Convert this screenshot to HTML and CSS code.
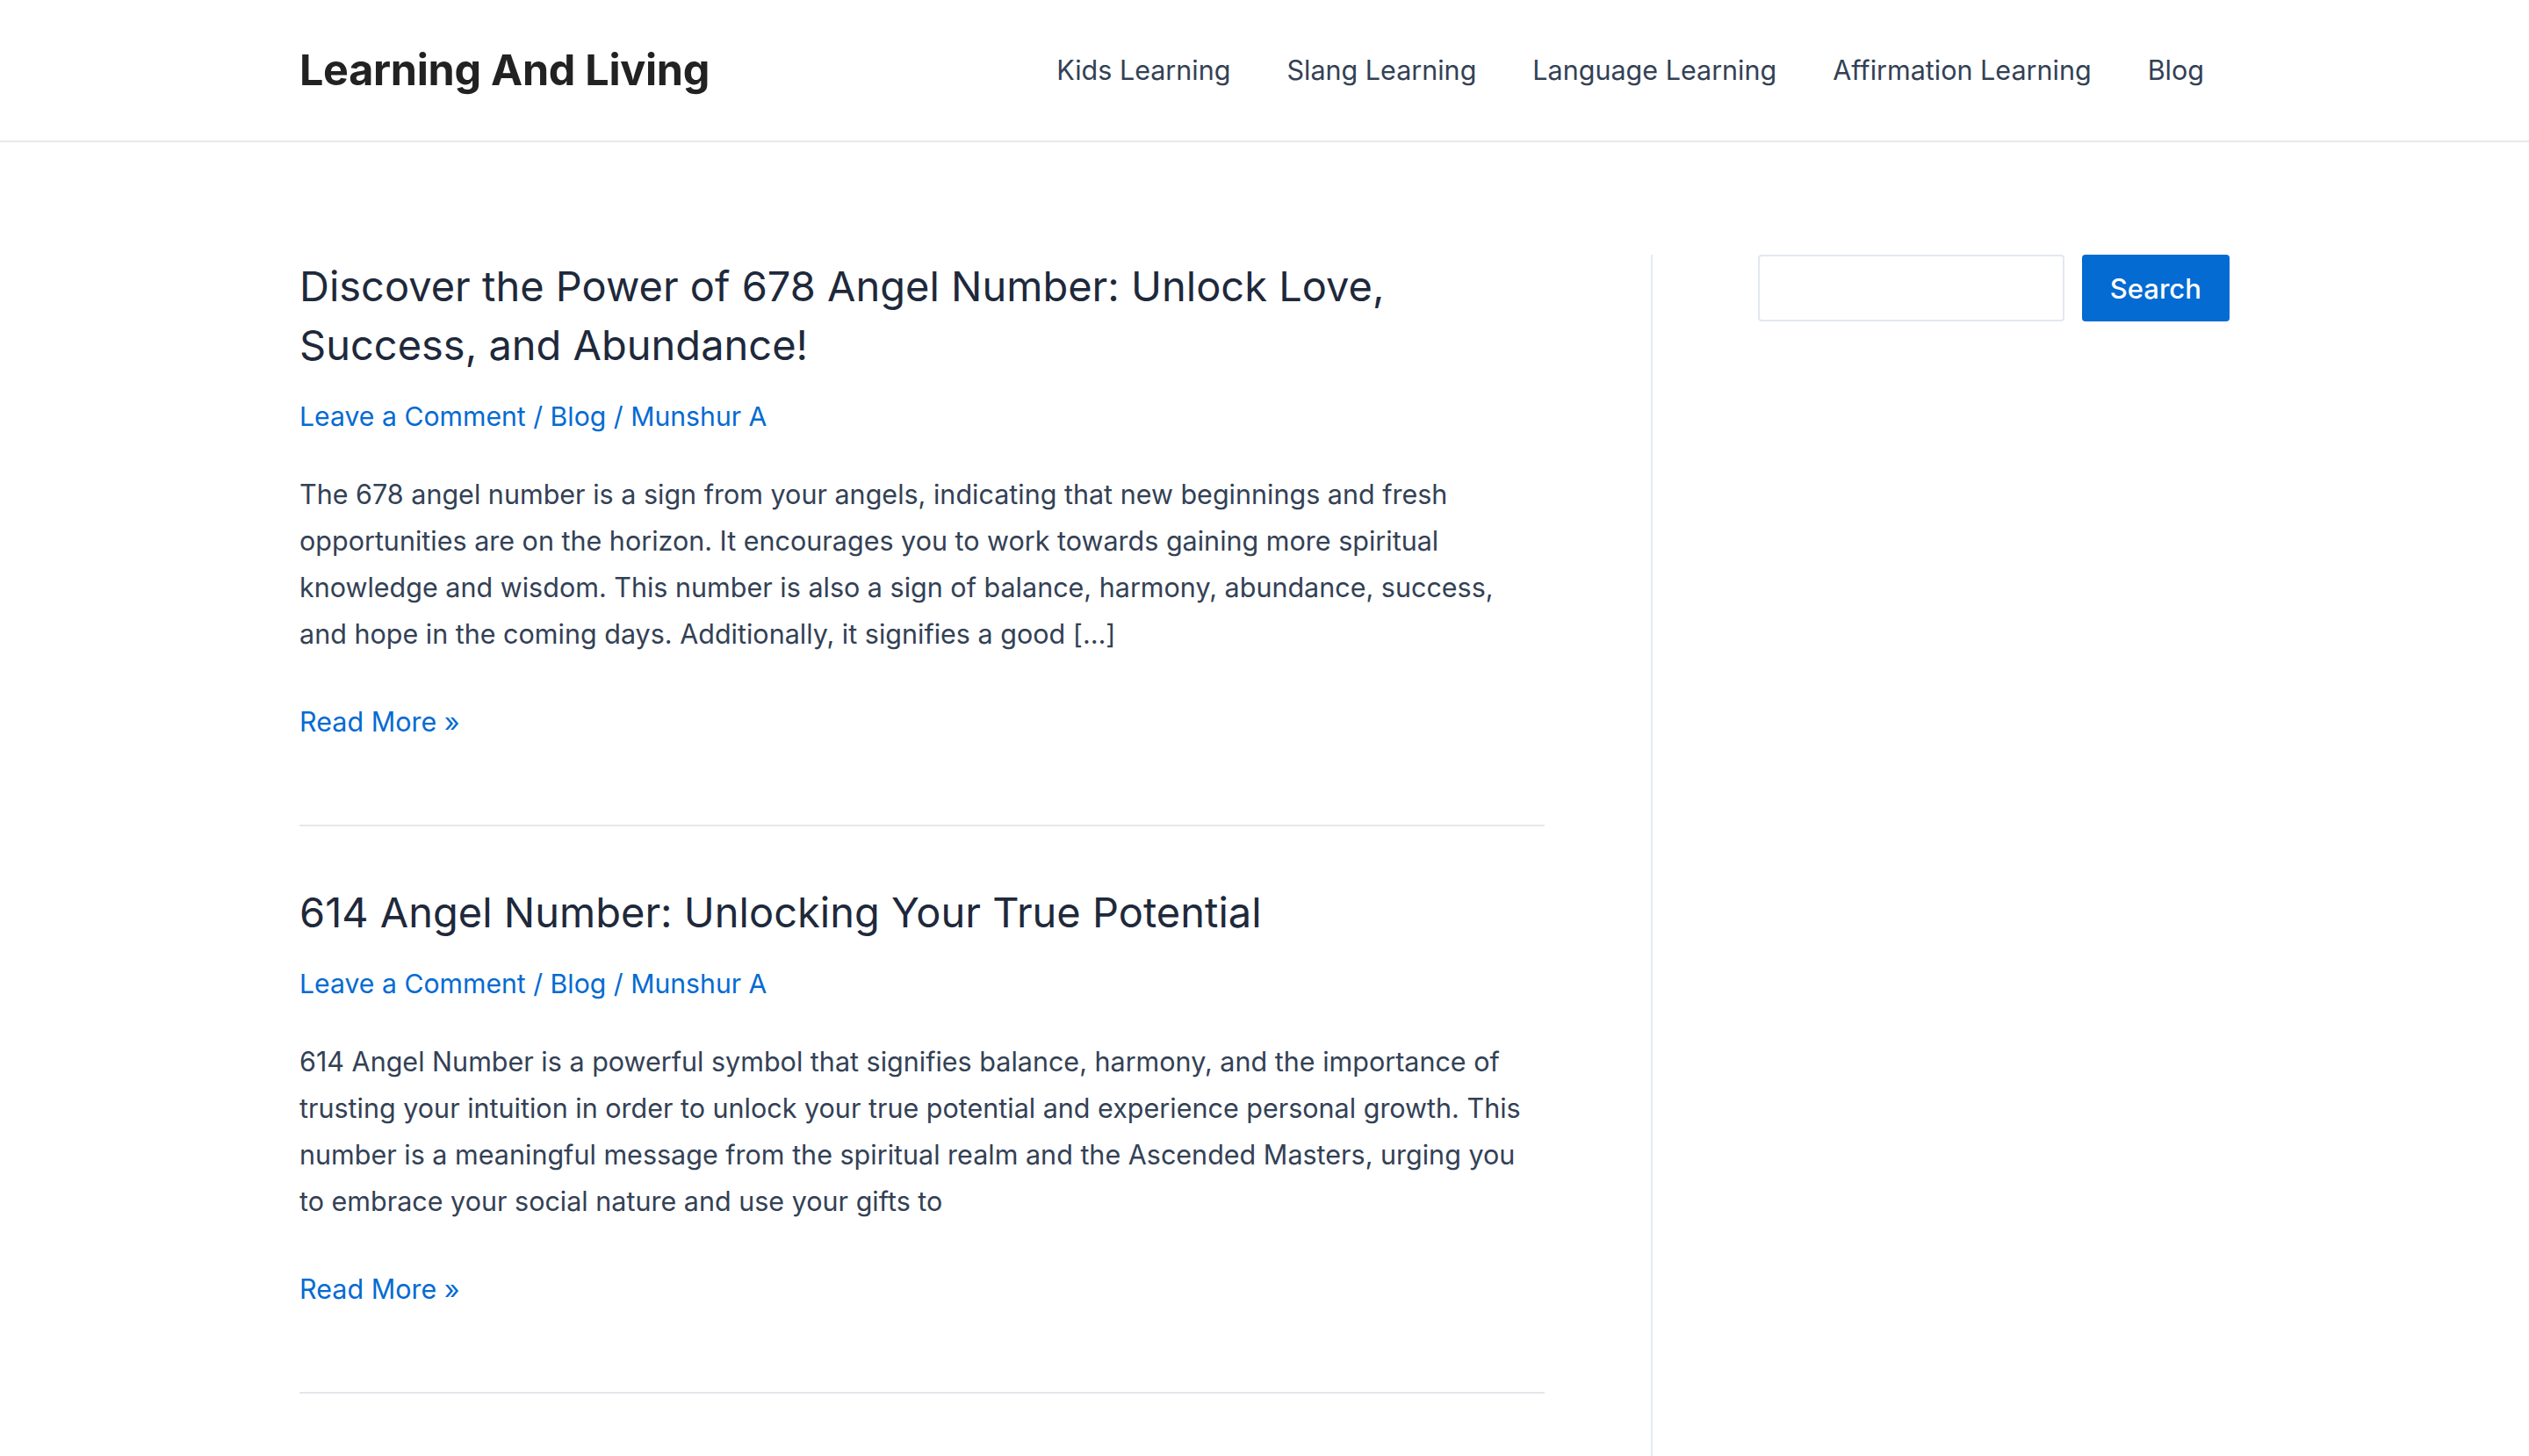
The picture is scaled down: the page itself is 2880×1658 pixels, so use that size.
FILE: index.html
```html
<!DOCTYPE html>
<html lang="en">
<head>
<meta charset="utf-8">
<title>Learning And Living</title>
<link rel="stylesheet" href="styles.css">
</head>
<body>
<header class="site-header">
  <div class="container header-inner">
    <a class="site-title" href="#">Learning And Living</a>
    <nav class="main-nav">
      <a href="#">Kids Learning</a>
      <a href="#">Slang Learning</a>
      <a href="#">Language Learning</a>
      <a href="#">Affirmation Learning</a>
      <a href="#">Blog</a>
    </nav>
  </div>
</header>
<div class="container content">
  <main class="primary">
    <article class="post">
      <h2 class="post-title">Discover the Power of 678 Angel Number: Unlock Love, Success, and Abundance!</h2>
      <div class="post-meta"><a href="#">Leave a Comment</a> / <a href="#">Blog</a> / <a href="#">Munshur A</a></div>
      <p class="post-excerpt">The 678 angel number is a sign from your angels, indicating that new beginnings and fresh opportunities are on the horizon. It encourages you to work towards gaining more spiritual knowledge and wisdom. This number is also a sign of balance, harmony, abundance, success, and hope in the coming days. Additionally, it signifies a good […]</p>
      <a class="read-more" href="#">Read More »</a>
    </article>
    <article class="post">
      <h2 class="post-title">614 Angel Number: Unlocking Your True Potential</h2>
      <div class="post-meta"><a href="#">Leave a Comment</a> / <a href="#">Blog</a> / <a href="#">Munshur A</a></div>
      <p class="post-excerpt">614 Angel Number is a powerful symbol that signifies balance, harmony, and the importance of trusting your intuition in order to unlock your true potential and experience personal growth. This number is a meaningful message from the spiritual realm and the Ascended Masters, urging you to embrace your social nature and use your gifts to</p>
      <a class="read-more" href="#">Read More »</a>
    </article>
  </main>
  <aside class="sidebar">
    <form class="search-form">
      <input class="search-input" type="search" aria-label="Search">
      <button class="search-button" type="button">Search</button>
    </form>
  </aside>
</div>
</body>
</html>
```
FILE: styles.css
```css
* { box-sizing: border-box; }
html, body { margin: 0; padding: 0; background: #fff; }
body {
  font-family: Inter, "Noto Sans", sans-serif;
  color: #334155;
  font-size: 30.5px;
  line-height: 53px;
  height: 1658px;
  overflow: hidden;
}
a { text-decoration: none; }
.container {
  width: 2198px;
  margin: 0 auto;
}
.site-header {
  height: 162px;
  border-bottom: 2px solid #e8e8ea;
}
.header-inner {
  height: 160px;
  display: flex;
  align-items: center;
  justify-content: space-between;
}
.site-title {
  font-size: 48.5px;
  font-weight: 700;
  color: #222;
  letter-spacing: -0.3px;
  line-height: 1;
}
.main-nav {
  display: flex;
  align-items: center;
}
.main-nav a {
  color: #334155;
  font-size: 30.5px;
  padding: 0 32px;
  line-height: 1;
}
.main-nav a:last-child { padding-right: 29px; }
.content {
  display: flex;
  padding-top: 128px;
}
.primary {
  width: 70%;
  padding-top: 2px;
  padding-right: 121px;
}
.sidebar {
  width: 30%;
  border-left: 2px solid #e6eaf0;
  padding-left: 120px;
  min-height: 1400px;
}
.post {
  border-bottom: 2px solid #e5e7eb;
  padding-bottom: 91px;
  margin-bottom: 64px;
}
.post-title {
  margin: 0;
  font-size: 47px;
  line-height: 67px;
  font-weight: 400;
  color: #1e293b;
}
.post-meta {
  margin-top: 22px;
  color: #046bd2;
  font-size: 30.2px;
}
.post-meta a { color: #046bd2; }
.post-excerpt {
  margin: 35px 0 47px;
}
.read-more {
  display: block;
  color: #046bd2;
}
.search-form {
  display: flex;
  gap: 20px;
}
.search-input {
  width: 349px;
  height: 76px;
  border: 2px solid #e2e8f0;
  border-radius: 4px;
  background: #fff;
  outline: none;
  font: inherit;
}
.search-button {
  width: 169px;
  height: 76px;
  border: 0;
  border-radius: 4px;
  background: #046bd2;
  color: #fff;
  font-family: Inter, "Noto Sans", sans-serif;
  font-size: 31px;
  font-weight: 500;
  cursor: pointer;
}
```
